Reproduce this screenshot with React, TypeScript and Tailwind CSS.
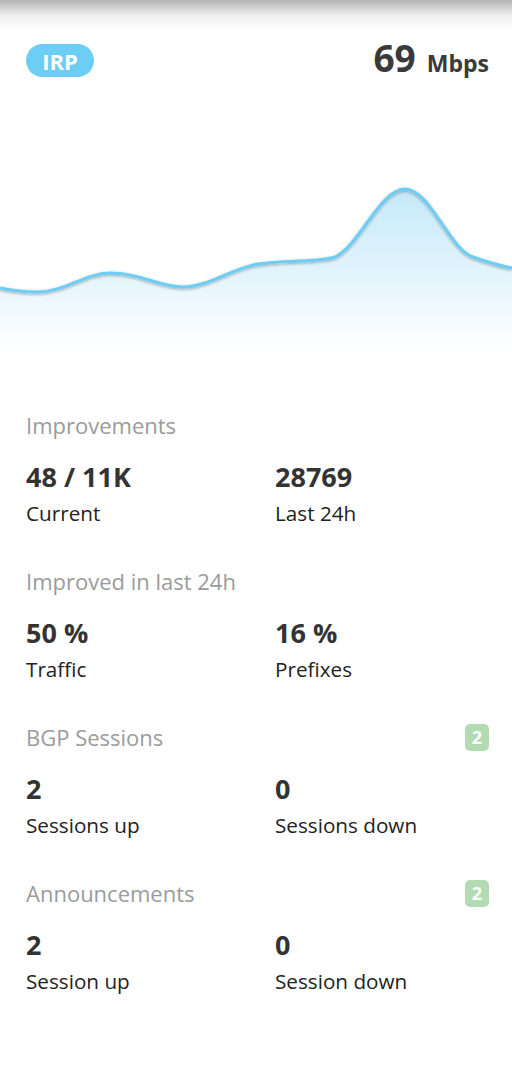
import React from "react";

// =========================
// DATA
// =========================
const sections = [
  {
    title: "Improvements",
    badge: null as string | null,
    items: [
      { value: "48 / 11K", label: "Current" },
      { value: "28769", label: "Last 24h" },
    ],
  },
  {
    title: "Improved in last 24h",
    badge: null as string | null,
    items: [
      { value: "50 %", label: "Traffic" },
      { value: "16 %", label: "Prefixes" },
    ],
  },
  {
    title: "BGP Sessions",
    badge: "2",
    items: [
      { value: "2", label: "Sessions up" },
      { value: "0", label: "Sessions down" },
    ],
  },
  {
    title: "Announcements",
    badge: "2",
    items: [
      { value: "2", label: "Session up" },
      { value: "0", label: "Session down" },
    ],
  },
];

const linePath =
  "M0,188 C15,191 25,192 37,192 C65,192 85,173 110,173 C140,173 160,187 183,187 C210,187 235,165 267,163 C295,160 320,162 335,157 C360,145 380,89 405,89 C430,89 450,150 473,157 C490,163 500,166 512,168";

function TrafficChart() {
  return (
    <svg
      width="512"
      height="260"
      viewBox="0 0 512 260"
      className="block mt-[23px]"
    >
      <defs>
        <linearGradient
          id="area"
          x1="0"
          y1="89"
          x2="0"
          y2="252"
          gradientUnits="userSpaceOnUse"
        >
          <stop offset="0" stopColor="#c4e9f9" />
          <stop offset="1" stopColor="#ffffff" />
        </linearGradient>
        <filter id="shadow" x="-10%" y="-20%" width="120%" height="160%">
          <feDropShadow
            dx="0"
            dy="1"
            stdDeviation="1.6"
            floodColor="#000"
            floodOpacity="0.35"
          />
        </filter>
      </defs>
      <path d={`${linePath} L512,260 L0,260 Z`} fill="url(#area)" />
      <path
        d={linePath}
        fill="none"
        stroke="#6ccef5"
        strokeWidth="3"
        filter="url(#shadow)"
      />
    </svg>
  );
}

export default function App() {
  return (
    <div
      className="w-[512px] min-h-[1080px] bg-white text-[#333] relative"
      style={{ fontFamily: '"Open Sans", "Noto Sans", sans-serif' }}
    >
      {/* TOP SHADOW */}
      <div className="absolute top-0 left-0 right-0 h-[30px] bg-gradient-to-b from-[#b4b4b4] via-[#ededed] to-white" />

      {/* HEADER */}
      <div className="relative pt-[44px] px-[23px]">
        <div className="flex items-center justify-between h-[33px]">
          <span className="ml-[3px] h-[33px] w-[68px] rounded-full bg-[#6ccef5] text-white font-bold text-[22px] flex items-center justify-center leading-none">
            IRP
          </span>

          <div className="flex items-baseline gap-[11px] text-[#3a3a3a] font-bold">
            <span className="text-[37px] leading-[33px]">69</span>
            <span className="text-[23px] leading-[33px]">Mbps</span>
          </div>
        </div>
      </div>

      {/* CHART */}
      <TrafficChart />

      {/* STATS */}
      <div className="pt-[50px] px-[26px]">
        {sections.map((s) => (
          <div key={s.title} className="h-[156px]">
            <div className="flex items-center justify-between h-[30px]">
              <span className="text-[22px] leading-[30px] text-[#9b9b9b]">
                {s.title}
              </span>
              {s.badge && (
                <span className="mr-[-3px] w-[24px] h-[27px] rounded-[5px] bg-[#b3dbb1] text-white font-bold text-[18px] flex items-center justify-center">
                  {s.badge}
                </span>
              )}
            </div>

            <div className="grid grid-cols-[249px_1fr] mt-[19px]">
              {s.items.map((it) => (
                <div key={it.label}>
                  <div className="text-[27px] leading-[36px] font-bold text-[#333]">
                    {it.value}
                  </div>
                  <div className="text-[20.7px] leading-[28px] mt-[4px] text-[#222]">
                    {it.label}
                  </div>
                </div>
              ))}
            </div>
          </div>
        ))}
      </div>
    </div>
  );
}
